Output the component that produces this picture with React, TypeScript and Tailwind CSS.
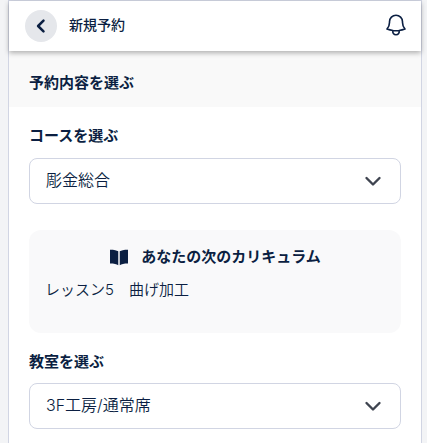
const font = "font-['Inter','Noto_Sans_CJK_JP',sans-serif]";

const Chevron = () => (
  <svg viewBox="0 0 24 24" fill="none" className="h-6 w-6 text-[#3f4450]" stroke="currentColor" strokeWidth={2.4} strokeLinecap="round" strokeLinejoin="round">
    <path d="M5.500 9l6.500 6.500L18.500 9" />
  </svg>
);

const Select = ({ value, className }: { value: string; className: string }) => (
  <div className={`${className} flex h-[46px] items-center justify-between rounded-lg border border-[#d1d5e3] bg-white pl-4 pr-[15px] text-base font-[350] text-[#0b1f42]`}>
    <span className="mb-[3px]">{value}</span>
    <Chevron />
  </div>
);

export default function App() {
  return (
    <div className={`${font} h-[443px] overflow-hidden bg-[#f3f4f6] pl-2 pr-[5px]`}>
      <div className="h-full border-x border-t border-[#d1d5e3] bg-white">
        <header className="relative z-10 flex h-[50px] items-center justify-between bg-white pl-4 pr-3 shadow-[0_2px_5px_rgba(0,0,0,0.3)]">
          <div className="flex items-center gap-3">
            <button className="flex h-8 w-8 items-center justify-center rounded-full bg-[#e5e7eb]">
              <svg viewBox="0 0 24 24" fill="none" className="h-5 w-5 text-[#0b1f42]" stroke="currentColor" strokeWidth={3} strokeLinecap="round" strokeLinejoin="round">
                <path d="M15 5.500 8.500 12l6.500 6.500" />
              </svg>
            </button>
            <span className="mb-[2px] text-sm font-medium text-[#0b1f42]">新規予約</span>
          </div>
          <svg viewBox="0 0 24 24" fill="none" className="mb-[2px] h-[26px] w-[26px] text-[#0b1f42]" stroke="currentColor" strokeWidth={1.5} strokeLinecap="round" strokeLinejoin="round">
            <path d="M14.857 17.082a23.848 23.848 0 0 0 5.454-1.31A8.967 8.967 0 0 1 18 9.750V9A6 6 0 0 0 6 9v.750a8.967 8.967 0 0 1-2.312 6.022c1.733.64 3.56 1.085 5.455 1.31m5.714 0a24.255 24.255 0 0 1-5.714 0m5.714 0a3 3 0 1 1-5.714 0" />
          </svg>
        </header>
        <div className="flex h-14 items-center bg-[#f9f9f9] px-5 pt-2 text-[15px] font-bold text-[#0b1f42]">予約内容を選ぶ</div>
        <section className="px-5 pt-[18px]">
          <h2 className="text-[15px] leading-[22px] font-bold text-[#0b1f42]">コースを選ぶ</h2>
          <Select value="彫金総合" className="mt-[11px]" />
          <div className="mt-[26px] h-[103px] rounded-xl bg-[#f9f9fa] px-4 pt-[16px] text-[#0b1f42]">
            <div className="flex items-center justify-center gap-3 text-[15px] leading-[22px] font-bold">
              <svg viewBox="0 0 20 20" className="h-5 w-5 fill-[#0b1f42]">
                <path d="M9.250 4.200C7.800 3.300 5.200 2.700 1 2.700v13.800c4 0 6.700.6 8.250 1.700V4.200z" />
                <path d="M10.750 4.200c1.450-.9 4.050-1.500 8.250-1.500v13.800c-4 0-6.700.6-8.250 1.700V4.200z" />
              </svg>
              <span>あなたの次のカリキュラム</span>
            </div>
            <p className="mt-[11px] text-[15px] leading-[22px] font-[350]">レッスン5　曲げ加工</p>
          </div>
          <h2 className="mt-[18px] text-[15px] leading-[22px] font-bold text-[#0b1f42]">教室を選ぶ</h2>
          <Select value="3F工房/通常席" className="mt-[10px]" />
        </section>
      </div>
    </div>
  );
}
